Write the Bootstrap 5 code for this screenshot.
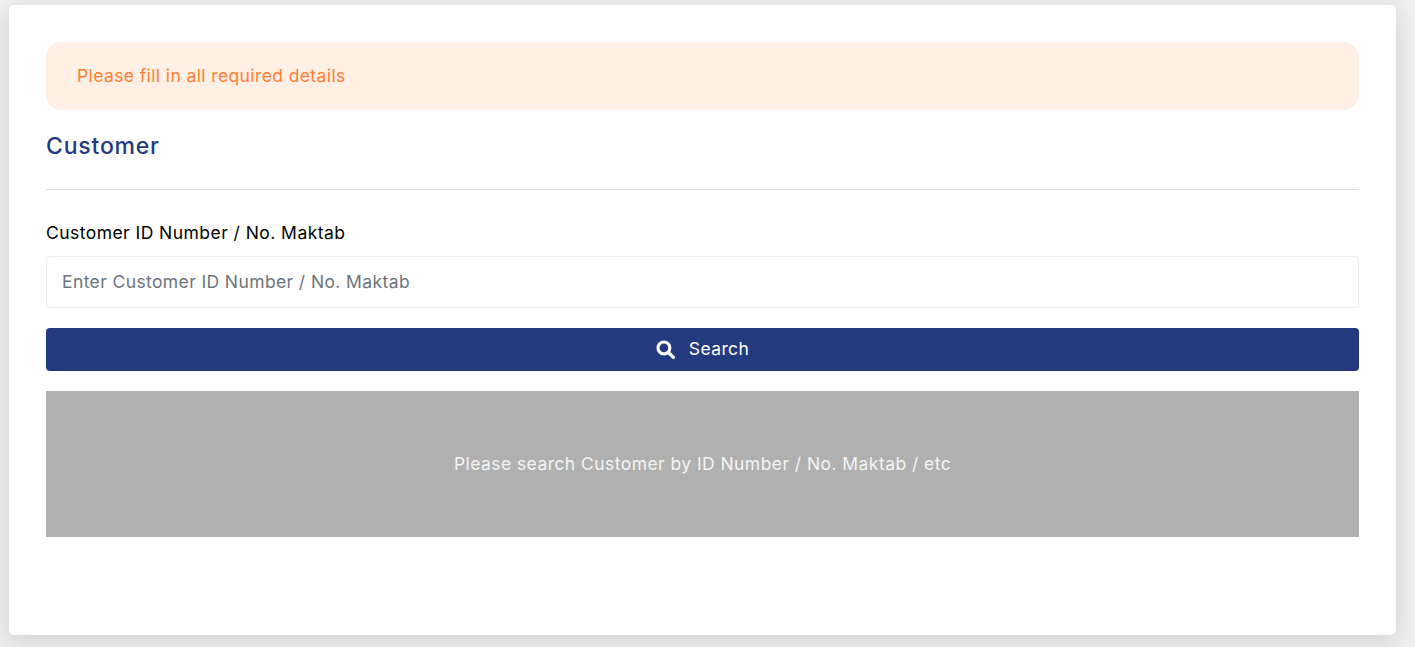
<!DOCTYPE html>
<html lang="en">
<head>
  <meta charset="UTF-8">
  <meta name="viewport" content="width=device-width, initial-scale=1.0">
  <title>Customer</title>
  <link href="https://cdn.jsdelivr.net/npm/bootstrap@5.3.0/dist/css/bootstrap.min.css" rel="stylesheet">
  <style>
    html, body { height: 647px; overflow: hidden; }
    body { font-family: Inter, "Open Sans", sans-serif; background: #efefef; color: #000; font-size: 17.5px; letter-spacing: .39px; }
    .page-wrap { padding: 5px 19px 12px 9px; height: 647px; }
    .main-card {
      height: 630px;
      padding: 37px;
      border: 0;
      border-radius: 5px;
      background: #fff;
      box-shadow: 0 6px 24px rgba(0,0,0,.13);
    }
    .notice-box {
      height: 68px;
      margin: 0 0 19px;
      padding: 0 31px;
      border: 0;
      border-radius: 15px;
      background: #ffefe4;
      color: #ff7f32;
    }
    .section-title { margin: 0; height: 60px; font-size: 23px; font-weight: 500; line-height: 35px; letter-spacing: .8px; color: #233a7f; }
    .section-line { margin: 0 0 30px; border-top: 1px solid #e2e2e2; opacity: 1; }
    .field-label { margin: 0 0 10px; line-height: 26px; display: block; letter-spacing: .45px; }
    .field-input {
      height: 52px;
      margin-bottom: 20px;
      padding: 0 15px 2px;
      border: 1px solid #efefef;
      border-radius: 4px;
      font-size: 17.5px;
      letter-spacing: .39px;
    }
    .field-input::placeholder { color: #6c757d; }
    .search-btn {
      height: 43px;
      border: 0;
      border-radius: 4px;
      background: #233a7f;
      color: #fff;
      font-size: 17.5px;
      letter-spacing: .39px;
      gap: 14px;
    }
    .search-btn:hover { background: #233a7f; color: #fff; }
    .empty-box { height: 146px; margin-top: 20px; background: #b0b0b0; color: #f4f4f4; letter-spacing: .44px; }
  </style>
</head>
<body>
  <div class="page-wrap">
    <div class="card main-card">
      <div class="alert notice-box d-flex align-items-center" role="alert">Please fill in all required details</div>
      <h5 class="section-title">Customer</h5>
      <hr class="section-line">
      <form>
        <label for="customerId" class="field-label">Customer ID Number / No. Maktab</label>
        <input type="text" class="form-control field-input" id="customerId" placeholder="Enter Customer ID Number / No. Maktab">
        <button type="button" class="btn search-btn w-100 d-flex align-items-center justify-content-center">
          <svg width="19" height="19" viewBox="0 0 18 18" aria-hidden="true"><circle cx="7.5" cy="7.5" r="5.6" fill="none" stroke="#fff" stroke-width="3"></circle><path d="M11.8 11.8 16.5 16.5" stroke="#fff" stroke-width="3.2" stroke-linecap="round"></path></svg>
          <span>Search</span>
        </button>
      </form>
      <div class="empty-box d-flex align-items-center justify-content-center">Please search Customer by ID Number / No. Maktab / etc</div>
    </div>
  </div>
  <script src="https://cdn.jsdelivr.net/npm/bootstrap@5.3.0/dist/js/bootstrap.bundle.min.js"></script>
</body>
</html>
